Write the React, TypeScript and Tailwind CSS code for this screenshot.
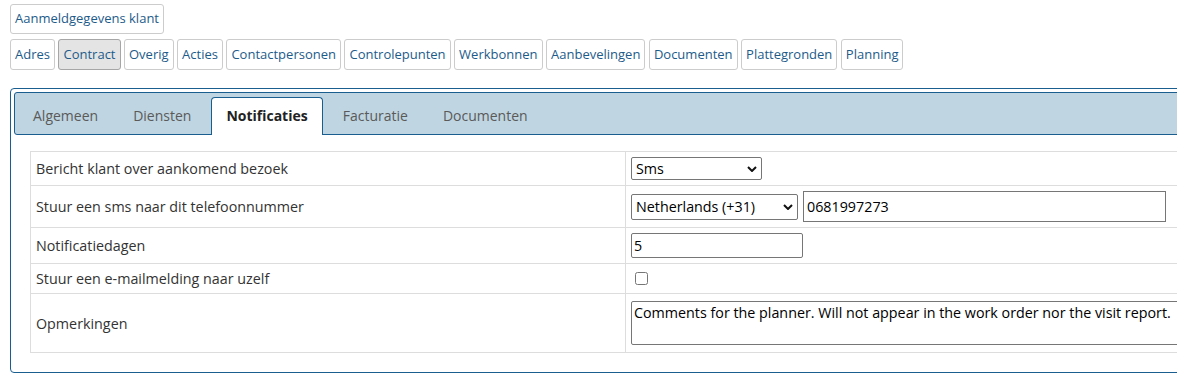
import { useState } from "react";

const sections = [
  "Adres",
  "Contract",
  "Overig",
  "Acties",
  "Contactpersonen",
  "Controlepunten",
  "Werkbonnen",
  "Aanbevelingen",
  "Documenten",
  "Plattegronden",
  "Planning",
];

const tabs = ["Algemeen", "Diensten", "Notificaties", "Facturatie", "Documenten"];

function Chevron() {
  return (
    <svg
      viewBox="0 0 10 6"
      className="pointer-events-none absolute right-[5px] top-1/2 h-[6px] w-[10px] -translate-y-1/2"
    >
      <path d="M1 1 L5 5 L9 1" fill="none" stroke="#111" strokeWidth="2" />
    </svg>
  );
}

function Select({ value, options, className }: { value: string; options: string[]; className: string }) {
  return (
    <div className={`relative inline-block align-middle ${className}`}>
      <select
        defaultValue={value}
        className="h-full w-full appearance-none rounded-[2px] border border-[#767676] bg-white pl-[4px] pr-[20px] text-[14.3px] text-black outline-none"
      >
        {options.map((o) => (
          <option key={o}>{o}</option>
        ))}
      </select>
      <Chevron />
    </div>
  );
}

function Row({ label, h, children }: { label: string; h: string; children: React.ReactNode }) {
  return (
    <tr className={h}>
      <td className="border border-[#dddddd] px-[5px] align-middle">{label}</td>
      <td className="border border-[#dddddd] px-[5px] align-middle">{children}</td>
    </tr>
  );
}

export default function App() {
  const [active, setActive] = useState("Notificaties");

  return (
    <div className="w-full overflow-hidden bg-white pl-[10px] pt-[4px] font-['Open_Sans',sans-serif]">
      <button className="h-[30px] rounded-[3px] border border-[#cccccc] bg-white px-[4px] text-[13px] text-[#1d5b8a]">
        Aanmeldgegevens klant
      </button>

      <div className="mt-[5px] flex gap-[3.5px]">
        {sections.map((s) => (
          <button
            key={s}
            className={`h-[31px] shrink-0 rounded-[3px] border px-[4px] text-[13px] text-[#1d5b8a] ${
              s === "Contract" ? "border-[#a6a6a6] bg-[#e4e4e4]" : "border-[#cccccc] bg-white"
            }`}
          >
            {s}
          </button>
        ))}
      </div>

      <div className="mt-[18px] w-[1220px] rounded-[4px] border border-[#1a5e8f] p-[3px]">
        <div className="flex h-[43px] items-end rounded-[3px] border border-[#1a5e8f] bg-[#bfd5e1] px-[3px]">
          {tabs.map((t) => {
            const on = t === active;
            return (
              <button
                key={t}
                onClick={() => setActive(t)}
                className={`relative -mb-px mr-[5px] h-[38px] shrink-0 rounded-t-[4px] border border-b-0 px-[14px] pb-[2px] text-[14px] leading-[21px] ${
                  on
                    ? "border-[#1a5e8f] bg-white font-bold text-[#222222]"
                    : "border-transparent text-[#5a5a5a]"
                }`}
              >
                {t}
              </button>
            );
          })}
        </div>

        <div className="px-[16px] pb-[16px] pt-[16px]">
          <table className="w-[1180px] table-fixed border-collapse text-[14.3px] leading-[19px] text-[#333333]">
            <colgroup>
              <col className="w-[595px]" />
              <col />
            </colgroup>
            <tbody>
              <Row label="Bericht klant over aankomend bezoek" h="h-[34px]">
                <Select value="Sms" options={["Sms", "E-mail", "Geen"]} className="h-[23px] w-[131px]" />
              </Row>
              <Row label="Stuur een sms naar dit telefoonnummer" h="h-[42px]">
                <div className="flex items-center gap-[5px]">
                  <Select
                    value="Netherlands (+31)"
                    options={["Netherlands (+31)", "Belgium (+32)", "Germany (+49)"]}
                    className="h-[26px] w-[167px]"
                  />
                  <input
                    defaultValue="0681997273"
                    className="h-[31px] w-[363px] border border-[#767676] px-[3px] text-[14.3px] text-black outline-none"
                  />
                </div>
              </Row>
              <Row label="Notificatiedagen" h="h-[36px]">
                <input
                  defaultValue="5"
                  className="block h-[25px] w-[172px] rounded-[2px] border border-[#767676] px-[2px] text-[14.3px] text-black outline-none"
                />
              </Row>
              <Row label="Stuur een e-mailmelding naar uzelf" h="h-[30px]">
                <input type="checkbox" className="ml-[4px] block h-[13px] w-[13px]" />
              </Row>
              <Row label="Opmerkingen" h="h-[59px]">
                <textarea
                  defaultValue="Comments for the planner. Will not appear in the work order nor the visit report."
                  className="block h-[44px] w-[560px] resize-none rounded-[2px] border border-[#767676] px-[2px] py-[1px] text-[14.3px] leading-[19px] text-black outline-none"
                />
              </Row>
            </tbody>
          </table>
        </div>
      </div>
    </div>
  );
}
